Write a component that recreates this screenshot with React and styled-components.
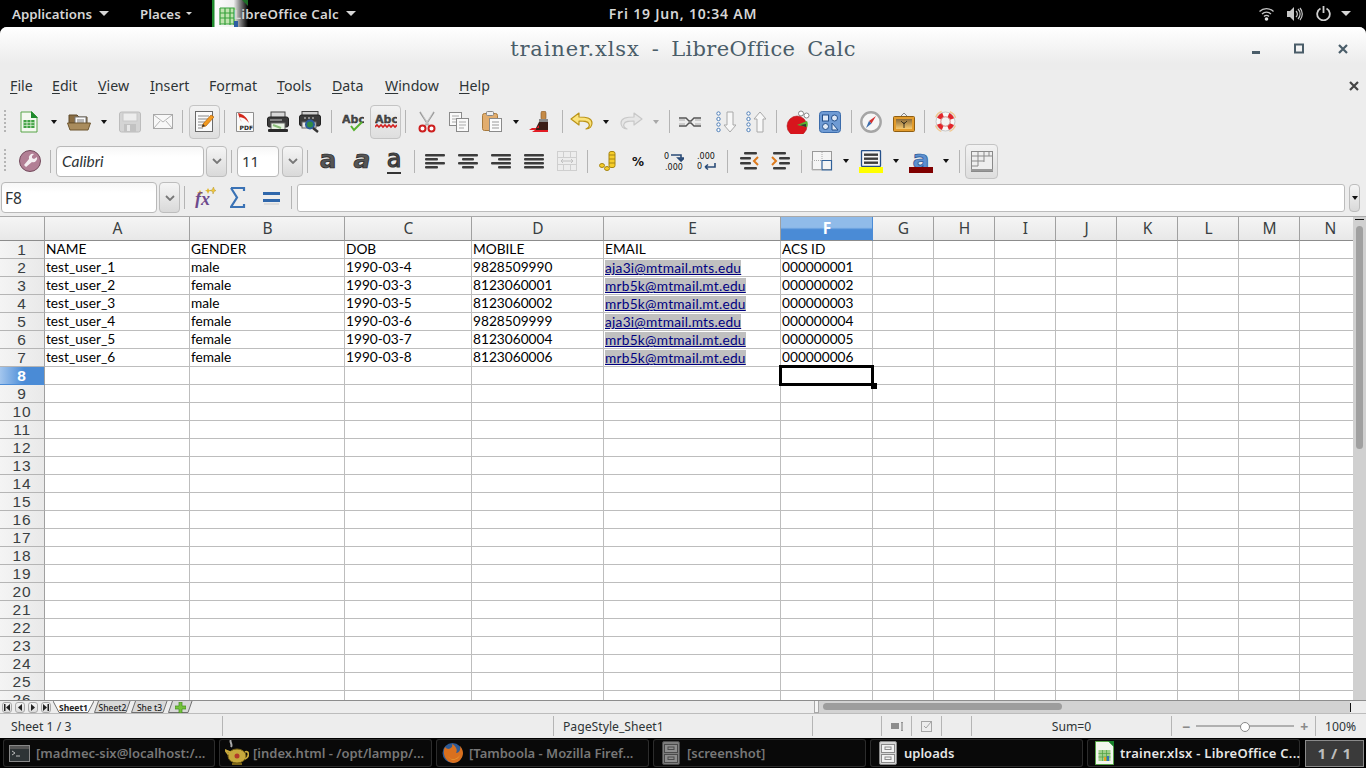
import React from "react";
import styled, { createGlobalStyle } from "styled-components";

const UI_FONT = `"Noto Sans", "Open Sans", "DejaVu Sans", sans-serif`;
const COLS = "45px 145px 155px 127px 132px 177px 92px 61px 61px 61px 61px 61px 61px 61px 61px";
const LETTERS = ["A", "B", "C", "D", "E", "F", "G", "H", "I", "J", "K", "L", "M", "N"];

const DATA = [
  ["NAME", "GENDER", "DOB", "MOBILE", "EMAIL", "ACS ID"],
  ["test_user_1", "male", "1990-03-4", "9828509990", "aja3i@mtmail.mts.edu", "000000001"],
  ["test_user_2", "female", "1990-03-3", "8123060001", "mrb5k@mtmail.mt.edu", "000000002"],
  ["test_user_3", "male", "1990-03-5", "8123060002", "mrb5k@mtmail.mt.edu", "000000003"],
  ["test_user_4", "female", "1990-03-6", "9828509999", "aja3i@mtmail.mts.edu", "000000004"],
  ["test_user_5", "female", "1990-03-7", "8123060004", "mrb5k@mtmail.mt.edu", "000000005"],
  ["test_user_6", "female", "1990-03-8", "8123060006", "mrb5k@mtmail.mt.edu", "000000006"],
];

const GlobalStyle = createGlobalStyle`
  html, body { margin: 0; padding: 0; background: #000; }
  body { font-family: ${UI_FONT}; overflow: hidden; }
  * { box-sizing: border-box; }
`;

const Shell = styled.div`
  width: 1366px;
  height: 768px;
  display: flex;
  flex-direction: column;
  overflow: hidden;
  background: #000;
`;

/* gnome panel */
const Panel = styled.div`
  height: 27px;
  flex: none;
  display: grid;
  grid-template-columns: 1fr auto 1fr;
  align-items: center;
  color: #d6d6d6;
  font-size: 13.3px;
  font-weight: 600;
`;
const PanelLeft = styled.div`
  display: flex;
  align-items: center;
  height: 100%;
`;
const PanelRight = styled.div`
  display: flex;
  align-items: center;
  justify-content: flex-end;
  height: 100%;
  padding-right: 15px;
  gap: 13px;
`;
const PanelItem = styled.div`
  display: flex;
  align-items: center;
  margin-left: ${(p) => p.$ml}px;
  gap: ${(p) => p.$gap || 7}px;
  letter-spacing: ${(p) => p.$ls || 0}px;
  white-space: nowrap;
`;
const Clock = styled.div`
  white-space: nowrap;
  font-size: 14px;
  letter-spacing: 0.8px;
`;
const AppIconBox = styled.div`
  width: 36px;
  height: 27px;
  margin-left: 20px;
  margin-right: -14px;
  flex: none;
`;
const PanelCaret = styled.span`
  width: 0;
  height: 0;
  margin-left: ${(p) => p.$ml || 0}px;
  border-left: ${(p) => p.$s || 5}px solid transparent;
  border-right: ${(p) => p.$s || 5}px solid transparent;
  border-top: ${(p) => p.$s || 5}px solid #d6d6d6;
`;

/* window */
const Win = styled.div`
  flex: 1;
  display: flex;
  flex-direction: column;
  background: #ededed;
  border-radius: 7px 7px 0 0;
  overflow: hidden;
  min-height: 0;
`;
const TitleBar = styled.div`
  height: 43px;
  flex: none;
  display: grid;
  grid-template-columns: 1fr auto 1fr;
  align-items: center;
  background: linear-gradient(#ffffff, #ececec 85%);
`;
const Title = styled.div`
  font-family: "DejaVu Serif", serif;
  font-size: 21px;
  color: #4a5d69;
  white-space: pre;
  letter-spacing: 0.35px;
  word-spacing: -1px;
  padding-top: 1px;
`;
const TitleFile = styled.span`
  letter-spacing: 0.85px;
`;
const WinButtons = styled.div`
  display: flex;
  justify-content: flex-end;
  align-items: center;
  padding-right: 18px;
  gap: 34px;
`;
const MenuBar = styled.div`
  height: 30px;
  flex: none;
  display: flex;
  align-items: center;
  padding: 1px 7px 0 0;
  font-size: 14.2px;
  color: #2e3436;
`;
const MenuItem = styled.div`
  width: ${(p) => p.$w}px;
  padding-left: 10px;
  flex: none;
  u { text-underline-offset: 2px; text-decoration-thickness: 1px; }
`;
const MenuClose = styled.div`
  margin-left: auto;
  display: flex;
`;
const ToolRow = styled.div`
  height: ${(p) => p.$h}px;
  flex: none;
  display: flex;
  align-items: center;
`;
const Slot = styled.div`
  width: ${(p) => p.$w}px;
  height: 100%;
  flex: none;
  display: flex;
  align-items: center;
  justify-content: center;
`;
const Grip = styled.div`
  width: 2px;
  height: 24px;
  margin-left: -1px;
  background: repeating-linear-gradient(#b5b5b5 0 2px, transparent 2px 4px);
`;
const Sep = styled.div`
  width: 1px;
  height: 23px;
  background: #b4b4b4;
`;
const Caret = styled.span`
  width: 0;
  height: 0;
  border-left: 3.5px solid transparent;
  border-right: 3.5px solid transparent;
  border-top: 4px solid ${(p) => (p.$off ? "#a8a8a8" : "#111")};
`;
const Toggled = styled.div`
  width: ${(p) => p.$w}px;
  height: ${(p) => p.$h}px;
  display: flex;
  align-items: center;
  justify-content: center;
  border: 1px solid #c4c4c4;
  border-radius: 4px;
  background: linear-gradient(#f2f2f2, #dedede);
`;
const Field = styled.div`
  width: ${(p) => p.$w}px;
  height: ${(p) => p.$h}px;
  flex: none;
  display: flex;
  align-items: center;
  padding-left: ${(p) => p.$pad || 5}px;
  background: linear-gradient(#f7f7f7, #fff 35%);
  border: 1px solid #b9b9b9;
  border-radius: 4px;
  color: #2e3436;
  font-family: ${(p) => (p.$italic ? `"Lato", sans-serif` : UI_FONT)};
  font-style: ${(p) => (p.$italic ? "italic" : "normal")};
  font-size: ${(p) => p.$size || 14}px;
  margin-left: ${(p) => p.$ml || 0}px;
`;
const Drop = styled.div`
  width: ${(p) => p.$w || 21}px;
  height: ${(p) => p.$h || 31}px;
  flex: none;
  display: flex;
  align-items: center;
  justify-content: center;
  margin-left: ${(p) => p.$ml || 0}px;
  border: 1px solid #bdbdbd;
  border-radius: 4px;
  background: linear-gradient(#f5f5f5, #d9d9d9);
`;
const FormulaRow = styled.div`
  height: 37px;
  flex: none;
  display: flex;
  align-items: flex-start;
  padding: 3px 0 0 1px;
`;
const FormulaSlot = styled(Slot)`
  height: 31px;
`;
const FormulaInput = styled.div`
  width: 1048px;
  height: 28px;
  flex: none;
  margin: 2px 0 0 3px;
  background: #fff;
  border: 1px solid #bcbcbc;
  border-radius: 3px;
`;
const FormulaDrop = styled(Drop)`
  margin-top: 2px;
`;

/* big toolbar letters, bold/italic/underline and font colour */
const Glyph = styled.span`
  display: block;
  height: 22px;
  line-height: 19px;
  font-family: "DejaVu Sans", sans-serif;
  font-size: 25px;
  font-weight: 700;
  font-style: ${(p) => (p.$italic ? "italic" : "normal")};
  color: ${(p) => p.$color || "#555"};
  -webkit-text-stroke: 0.7px ${(p) => p.$edge || "#1e1e1e"};
`;
const UnderGlyph = styled(Glyph)`
  font-weight: 400;
  font-size: 24px;
  -webkit-text-stroke: 1.2px #333;
  position: relative;
  &::after {
    content: "";
    position: absolute;
    left: 0;
    right: 0;
    bottom: -2px;
    height: 2px;
    background: #333;
  }
`;
const Swatch = styled.div`
  position: relative;
  width: 24px;
  height: 23px;
  display: flex;
  justify-content: center;
  &::after {
    content: "";
    position: absolute;
    left: 0;
    right: 0;
    bottom: 0;
    height: 6px;
    background: #800000;
  }
`;

/* sheet */
const SheetArea = styled.div`
  flex: 1;
  display: flex;
  min-height: 0;
  background: #fff;
  border-top: 1px solid #a9a9a9;
  overflow: hidden;
`;
const SheetGrid = styled.div`
  width: 1353px;
  flex: none;
  overflow: hidden;
`;
const Row = styled.div`
  display: grid;
  grid-template-columns: ${COLS};
  height: ${(p) => p.$h || 18}px;
`;
const ColHead = styled.div`
  display: flex;
  align-items: center;
  justify-content: center;
  padding: 0 0 1px 1px;
  font-size: 15.5px;
  font-weight: ${(p) => (p.$on ? 700 : 400)};
  color: ${(p) => (p.$on ? "#fff" : "#3a3f42")};
  background: ${(p) =>
    p.$on
      ? "linear-gradient(#90bbe9 0 45%, #4a8bd6 55%)"
      : "linear-gradient(#f5f5f5, #e8e8e8)"};
  border-right: 1px solid ${(p) => (p.$on ? "#4a8bd6" : "#a0a0a0")};
  border-bottom: 1px solid #8c8c8c;
`;
const RowHead = styled.div`
  display: flex;
  align-items: center;
  justify-content: center;
  font-family: "Liberation Sans", Arial, sans-serif;
  font-size: 15.5px;
  letter-spacing: 0.8px;
  line-height: 17px;
  font-weight: ${(p) => (p.$on ? 700 : 400)};
  color: ${(p) => (p.$on ? "#fff" : "#3a3f42")};
  background: ${(p) =>
    p.$on ? "linear-gradient(90deg, #a3c6ee, #4a8bd6 55%)" : "linear-gradient(90deg, #f4f4f4, #e9e9e9)"};
  border-right: 1px solid #a0a0a0;
  border-bottom: 1px solid ${(p) => (p.$on ? "#4a8bd6" : "#b5b5b5")};
`;
const Cell = styled.div`
  position: relative;
  padding-left: 1px;
  font-family: "Lato", sans-serif;
  font-size: 13.7px;
  line-height: 15px;
  color: #000;
  white-space: nowrap;
  border-right: 1px solid #bdbdbd;
  border-bottom: 1px solid #bdbdbd;
`;
const MailLink = styled.span`
  display: inline-block;
  height: 15px;
  line-height: 15px;
  margin-top: 1px;
  letter-spacing: 0.25px;
  background: #c0c0c0;
  color: #000080;
  text-decoration: underline;
`;
const CellCursor = styled.div`
  position: absolute;
  left: -2px;
  top: -2px;
  width: 95px;
  height: 21px;
  border: 3px solid #000;
  pointer-events: none;
  z-index: 2;
  &::after {
    content: "";
    position: absolute;
    right: -6px;
    bottom: -6px;
    width: 6px;
    height: 6px;
    background: #000;
  }
`;
const VScroll = styled.div`
  flex: 1;
  background: #d0d0d0;
  position: relative;
  padding: 9px 3px 0;
  &::before {
    content: "";
    position: absolute;
    left: 2px;
    right: 2px;
    top: 2px;
    height: 1px;
    background: #111;
  }
`;
const VThumb = styled.div`
  height: 223px;
  background: #a0a0a0;
  border-radius: 4px;
`;

/* tabs + hscroll */
const TabBar = styled.div`
  height: 14px;
  flex: none;
  display: flex;
  background: #ededed;
  border-top: 1px solid #8d8d8d;
  border-bottom: 1px solid #bcbcbc;
`;
const NavGroup = styled.div`
  width: 53px;
  flex: none;
  display: flex;
  align-items: center;
  padding-left: 2px;
  gap: 3px;
`;
const NavBtn = styled.div`
  width: 10px;
  height: 11px;
  display: flex;
  align-items: center;
  justify-content: center;
  border: 1px solid #a9a9a9;
  border-radius: 3px;
  background: linear-gradient(#f4f4f4, #dcdcdc);
`;
const Tab = styled.div`
  position: relative;
  width: ${(p) => p.$w}px;
  flex: none;
  display: flex;
  align-items: center;
  justify-content: center;
  font-size: 8.5px;
  font-weight: ${(p) => (p.$on ? 700 : 500)};
  color: #222;
  span { position: relative; }
  svg.shape { position: absolute; left: 0; top: 0; }
`;
const TabFiller = styled.div`
  width: 621px;
  flex: none;
`;
const Splitter = styled.div`
  width: 5px;
  flex: none;
  background: #f4f4f4;
  border: 1px solid #a8a8a8;
  border-top: none;
`;
const HTrack = styled.div`
  width: 531px;
  flex: none;
  padding: 2px 4px;
  background: #d2d2d2;
`;
const HThumb = styled.div`
  width: 239px;
  height: 7px;
  background: #9d9d9d;
  border-radius: 4px;
`;
const TabEnd = styled.div`
  flex: 1;
  position: relative;
  &::before {
    content: "";
    position: absolute;
    left: 0;
    top: 2px;
    height: 9px;
    width: 1px;
    background: #111;
  }
`;

/* status bar */
const StatusBar = styled.div`
  height: 24px;
  flex: none;
  display: flex;
  align-items: stretch;
  padding: 2px 0;
  color: #2e3436;
  font-size: 12.2px;
`;
const StatusCell = styled.div`
  width: ${(p) => p.$w}px;
  flex: none;
  display: flex;
  align-items: center;
  justify-content: ${(p) => p.$align || "flex-start"};
  padding-left: ${(p) => p.$pad || 0}px;
  border-left: ${(p) => (p.$first ? "none" : "1px solid #b5b5b5")};
  gap: 6px;
`;
const Slider = styled.div`
  position: relative;
  width: 98px;
  height: 2px;
  background: #b0b0b0;
  &::after {
    content: "";
    position: absolute;
    left: 44px;
    top: -3px;
    width: 8px;
    height: 8px;
    border-radius: 50%;
    background: #fff;
    border: 1px solid #888;
  }
`;
const SliderMark = styled.span`
  color: #8a8a8a;
  font-weight: 700;
  font-size: 14px;
`;

/* window list */
const TaskBar = styled.div`
  height: 30px;
  flex: none;
  display: flex;
  align-items: center;
  padding: 1px 3px;
  gap: 4px;
  background: #000;
`;
const TaskItem = styled.div`
  width: ${(p) => p.$w || 213}px;
  height: 28px;
  flex: none;
  display: flex;
  align-items: center;
  padding-left: ${(p) => p.$pad || 6}px;
  gap: ${(p) => p.$gap || 6}px;
  border-radius: 3px;
  background: #090909;
  box-shadow: inset 0 0 0 1px #2c2c2c;
  font-size: 13px;
  font-weight: 600;
  white-space: nowrap;
  overflow: hidden;
  letter-spacing: ${(p) => p.$ls || 0}px;
  color: ${(p) => (p.$on ? "#e6e6e6" : "#777")};
`;
const Pager = styled.div`
  width: 59px;
  height: 27px;
  flex: none;
  margin-left: 1px;
  display: flex;
  align-items: center;
  justify-content: center;
  background: #3a3a3a;
  border: 1px solid #8a8a8a;
  color: #bdbdbd;
  font-size: 15px;
  font-weight: 700;
  letter-spacing: 0.6px;
`;

const Ico = ({ w = 24, h = 24, children }) => (
  <svg width={w} height={h} viewBox={`0 0 ${w} ${h}`} style={{ display: "block", flex: "none" }}>
    {children}
  </svg>
);

const SvgText = ({ children, ...rest }) => (
  <text fontFamily='"DejaVu Sans", sans-serif' {...rest}>
    {children}
  </text>
);

const NewCalcIcon = () => (
  <Ico w={18} h={22}>
    <path d="M1 1h11l5 5v15H1z" fill="#f4f8f0" stroke="#58a548" />
    <path d="M11 0l7 7h-7z" fill="#1f8a2d" />
    <rect x="3.5" y="9" width="11" height="8" fill="#3fa142" />
    <path d="M3.5 11.7h11M3.5 14.4h11M7 9v8M10.8 9v8" stroke="#dff0d8" strokeWidth="0.8" />
  </Ico>
);
const OpenIcon = () => (
  <Ico w={24} h={20}>
    <path d="M2 3h8l2 2h8v6H2z" fill="#8a6d42" stroke="#5f4a2a" />
    <rect x="8" y="5" width="11" height="9" fill="#fafafa" stroke="#777" />
    <path d="M10 8h7M10 10h7" stroke="#777" />
    <path d="M0.5 11h23l-2.5 7H3z" fill="#a98c5d" stroke="#6e5731" />
  </Ico>
);
const SaveIcon = () => (
  <Ico w={22} h={22}>
    <rect x="0.5" y="1" width="21" height="20" rx="2" fill="#d4d4d4" stroke="#bcbcbc" />
    <rect x="4" y="2" width="14" height="8" fill="#ededed" stroke="#c8c8c8" />
    <rect x="5" y="13" width="12" height="8" fill="#c2c2c2" />
    <rect x="8" y="14" width="3" height="6" fill="#e8e8e8" />
  </Ico>
);
const MailIcon = () => (
  <Ico w={20} h={15}>
    <rect x="0.5" y="0.5" width="19" height="14" fill="#f8f8f8" stroke="#a8a8a8" />
    <path d="M1 1l9 7 9-7M1 14l6-7M19 14l-6-7" fill="none" stroke="#b5b5b5" />
  </Ico>
);
const EditIcon = () => (
  <Ico w={19} h={21}>
    <rect x="0.5" y="0.5" width="17" height="20" fill="#fafafa" stroke="#6a6a6a" />
    <path d="M3 5h11M3 8h11M3 11h7M3 14h6M3 17h5" stroke="#888" />
    <path d="M7 16l1-3L16 4l3 2-8 9z" fill="#f39a1e" stroke="#b3620c" strokeWidth="0.7" />
    <path d="M7 16l1-3 2 2z" fill="#333" />
  </Ico>
);
const PdfIcon = () => (
  <Ico w={18} h={20}>
    <path d="M.5.5h17v19H.5z" fill="#fafafa" stroke="#8f8f8f" />
    <path d="M2 1c5 1 9 4 11 10-3-4-6-6-10-6l3 5C4 8 3 5 2 1z" fill="#d3281c" />
    <SvgText x="3.5" y="17.5" fontSize="6" fontWeight="700" fill="#222">PDF</SvgText>
  </Ico>
);
const PrintIcon = () => (
  <Ico w={22} h={22}>
    <rect x="4" y="1" width="14" height="7" fill="#d8d8d8" stroke="#444" />
    <rect x="0.5" y="6" width="21" height="10" rx="2" fill="#3b3b3b" stroke="#222" />
    <path d="M3 9h12" stroke="#ccc" />
    <rect x="4" y="12" width="14" height="7" fill="#e9f3e4" stroke="#666" />
    <path d="M6 14l8 3" stroke="#8bbf7a" strokeWidth="2" />
    <rect x="1" y="18" width="20" height="3" rx="1" fill="#2a2a2a" />
  </Ico>
);
const PreviewIcon = () => (
  <Ico w={22} h={22}>
    <rect x="3" y="0.5" width="16" height="5" fill="#cfcfcf" stroke="#444" />
    <rect x="0.5" y="4" width="21" height="11" rx="2" fill="#3b3b3b" stroke="#222" />
    <path d="M5 7h2M9 7h2M13 7h2" stroke="#ddd" />
    <rect x="3" y="11" width="14" height="6" fill="#e6e6e6" stroke="#666" />
    <circle cx="11" cy="13.5" r="4" fill="#2f8a45" stroke="#2a5c9c" strokeWidth="2" />
    <path d="M14 17l5 4" stroke="#333" strokeWidth="2.5" />
  </Ico>
);
const SpellIcon = () => (
  <Ico w={22} h={20}>
    <SvgText x="0" y="11" fontSize="11" fontWeight="700" fill="#4a4a4a" stroke="#222" strokeWidth="0.3">Abc</SvgText>
    <path d="M9 14l3 4 8-8" fill="none" stroke="#57b22e" strokeWidth="2" />
  </Ico>
);
const AutoSpellIcon = () => (
  <Ico w={22} h={18}>
    <SvgText x="0" y="10" fontSize="11" fontWeight="700" fill="#4a4a4a" stroke="#222" strokeWidth="0.3">Abc</SvgText>
    <path d="M0 14l2-2 2 2 2-2 2 2 2-2 2 2 2-2 2 2 2-2 2 2 2-2" fill="none" stroke="#d31f1f" strokeWidth="1.6" />
  </Ico>
);
const CutIcon = () => (
  <Ico w={18} h={22}>
    <path d="M2 1l9 14M16 1L7 15" stroke="#999" strokeWidth="1.6" />
    <path d="M3 1l8 14M15 1L7 15" stroke="#e6e6e6" strokeWidth="0.6" />
    <circle cx="4.5" cy="17.5" r="3" fill="#fff" stroke="#cd1f1f" strokeWidth="2" />
    <circle cx="13.5" cy="17.5" r="3" fill="#fff" stroke="#cd1f1f" strokeWidth="2" />
  </Ico>
);
const CopyIcon = () => (
  <Ico w={20} h={20}>
    <rect x="0.5" y="0.5" width="12" height="13" fill="#fafafa" stroke="#8a8a8a" />
    <path d="M3 4h7M3 7h7M3 10h5" stroke="#aaa" />
    <rect x="7.5" y="6.5" width="12" height="13" fill="#fafafa" stroke="#8a8a8a" />
    <path d="M10 10h7M10 13h7M10 16h5" stroke="#aaa" />
  </Ico>
);
const PasteIcon = () => (
  <Ico w={20} h={21}>
    <rect x="0.5" y="2.5" width="15" height="17" rx="2" fill="#e2ad6e" stroke="#a87a3d" />
    <rect x="4.5" y="0.5" width="7" height="4" rx="1" fill="#eee" stroke="#888" />
    <rect x="7.5" y="7.5" width="12" height="13" fill="#fcfcfc" stroke="#8a8a8a" />
    <path d="M10 11h7M10 14h7M10 17h7" stroke="#999" />
  </Ico>
);
const BrushIcon = () => (
  <Ico w={22} h={22}>
    <rect x="12" y="0" width="5" height="9" rx="2" fill="#c58a45" stroke="#80552a" strokeWidth="0.6" />
    <rect x="10" y="8" width="9" height="3" fill="#888" />
    <path d="M10 11h9v8H6z" fill="#3a1d16" />
    <path d="M10 14l-4 5H0l3-2h7z" fill="#e31c24" />
    <path d="M6 19h13v2H3z" fill="#e31c24" />
  </Ico>
);
const UndoIcon = ({ off }) => (
  <Ico w={23} h={20}>
    <path
      d="M9 1L1 7l8 6V9c5 0 9 0 10 3 1 2-1 4-3 5 4 0 6-3 6-6 0-5-6-6-13-6z"
      fill={off ? "#e6e6e6" : "#fbe37c"}
      stroke={off ? "#c8c8c8" : "#bb9418"}
      strokeWidth="1.2"
      strokeLinejoin="round"
      transform={off ? "matrix(-1 0 0 1 23 0)" : undefined}
    />
  </Ico>
);
const ChainIcon = () => (
  <Ico w={22} h={12}>
    <path d="M0 2h7l3 3h2l3-3h7M0 10h7l3-3h2l3 3h7" fill="none" stroke="#555" strokeWidth="1.4" />
    <path d="M0 4h6M16 4h6M0 8h6M16 8h6" stroke="#aaa" />
  </Ico>
);
const SortIcon = ({ up }) => (
  <Ico w={20} h={22}>
    {[2.5, 8, 13.5, 19].map((y) => (
      <circle key={y} cx="2.5" cy={y} r="1.7" fill="#fff" stroke="#4f7fb8" />
    ))}
    <path
      d={up ? "M14 1l6 7h-3v13h-6V8H8z" : "M11 1h6v13h3l-6 7-6-7h3z"}
      fill="#f8f8f8"
      stroke="#a8a8a8"
    />
  </Ico>
);
const ChartIcon = () => (
  <Ico w={24} h={24}>
    <circle cx="15" cy="3.5" r="2.5" fill="#fff" stroke="#888" />
    <circle cx="20.5" cy="5.5" r="2.5" fill="#fff" stroke="#888" />
    <circle cx="11" cy="16" r="10" fill="#d8151d" stroke="#a80e12" strokeWidth="0.5" />
    <path d="M11 15l10-4c1 2 1 4 0 6z" fill="#57b22e" />
    <path d="M14 15l6-1v3z" fill="#333" />
  </Ico>
);
const ShapesIcon = () => (
  <Ico w={22} h={22}>
    <rect x="0.5" y="0.5" width="21" height="21" rx="3" fill="#6f9bd4" stroke="#3c6cab" />
    <rect x="3.5" y="4" width="6" height="6" fill="#dfe9f6" stroke="#234f8a" />
    <circle cx="15.5" cy="7" r="3" fill="#dfe9f6" stroke="#234f8a" />
    <circle cx="6.5" cy="15.5" r="3" fill="#dfe9f6" stroke="#234f8a" />
    <path d="M13 12v7h6z" fill="#dfe9f6" stroke="#234f8a" />
  </Ico>
);
const CompassIcon = () => (
  <Ico w={22} h={22}>
    <circle cx="11" cy="11" r="9.700" fill="#f6f6f6" stroke="#a5a5a5" strokeWidth="2.400" />
    <path d="M16 5l-7 5 2.500 2.500z" fill="#d33131" />
    <path d="M6 17l3-7 2.500 2.500z" fill="#3c6cab" />
  </Ico>
);
const GalleryIcon = () => (
  <Ico w={22} h={20}>
    <defs>
      <linearGradient id="gallerySky" x1="0" x2="0" y1="0" y2="1">
        <stop offset="0" stopColor="#8a6a3a" />
        <stop offset="1" stopColor="#f6c96f" />
      </linearGradient>
    </defs>
    <path d="M7 5l4-4 4 4" fill="none" stroke="#888" />
    <rect x="0.5" y="4.5" width="21" height="15" rx="1" fill="#e39c2c" stroke="#8f5e12" />
    <rect x="3" y="7" width="16" height="10" fill="url(#gallerySky)" />
    <path d="M11 16V10M11 12l-3-3M11 12l3-3" stroke="#3d3320" />
  </Ico>
);
const HelpIcon = () => (
  <Ico w={23} h={23}>
    <circle
      cx="11.5"
      cy="11.5"
      r="10.800"
      fill="none"
      stroke="#f1c78e"
      strokeWidth="1.200"
      strokeDasharray="8.500 8.460"
      strokeDashoffset="-4.230"
    />
    <circle cx="11.5" cy="11.5" r="9.500" fill="#f7f7f7" stroke="#c8c8c8" />
    <circle
      cx="11.5"
      cy="11.5"
      r="7"
      fill="none"
      stroke="#e3262b"
      strokeWidth="4.500"
      strokeDasharray="5.500 5.500"
      strokeDashoffset="-2.750"
    />
    <circle cx="11.5" cy="11.5" r="4.700" fill="#f2f2f2" stroke="#c86a6a" strokeWidth="0.8" />
  </Ico>
);
const WrenchIcon = () => (
  <Ico w={22} h={22}>
    <circle cx="11" cy="11" r="10.5" fill="#b27f95" stroke="#744b5d" />
    <path d="M15 4a4 4 0 0 0-5 5l-5 6 2 2 6-5a4 4 0 0 0 5-5l-3 2-2-1 0-2z" fill="#f4eef1" />
  </Ico>
);
const AlignIcon = ({ lines }) => (
  <Ico w={20} h={15}>
    {lines.map(([x, w], i) => (
      <rect key={i} x={x} y={i * 4} width={w} height="2.6" rx="1" fill="#3c3c3c" />
    ))}
  </Ico>
);
const MergeIcon = () => (
  <Ico w={20} h={20}>
    <rect x="0.5" y="0.5" width="19" height="19" fill="none" stroke="#cfcfcf" />
    <path d="M0 6.5h20M0 13.5h20M6.5 0v6M13.5 0v6M6.5 14v6M13.5 14v6" stroke="#cfcfcf" />
    <path d="M4 10h12M4 10l2-2M4 10l2 2M16 10l-2-2M16 10l-2 2" stroke="#c0c0c0" fill="none" />
  </Ico>
);
const CoinsIcon = () => (
  <Ico w={18} h={20}>
    <rect x="10" y="0.5" width="6" height="16" rx="2" fill="#f6cd2a" stroke="#a68512" />
    <path d="M10 4h6M10 8h6M10 12h6" stroke="#a68512" />
    <ellipse cx="3" cy="14.5" rx="2.5" ry="2" fill="#f6cd2a" stroke="#a68512" />
    <ellipse cx="8" cy="17.5" rx="2.5" ry="2" fill="#f6cd2a" stroke="#a68512" />
  </Ico>
);
const PercentIcon = () => (
  <Ico w={16} h={14}>
    <SvgText x="0" y="12" fontSize="12" fontWeight="700" fill="#111">%</SvgText>
  </Ico>
);
const DecimalIcon = ({ remove }) => (
  <Ico w={20} h={20}>
    {remove ? (
      <>
        <SvgText x="0" y="8" fontSize="8" fill="#111">.000</SvgText>
        <SvgText x="0" y="18" fontSize="8" fill="#111">0</SvgText>
        <path d="M18 12v4H8M8 16l3-2.5M8 16l3 2.5" fill="none" stroke="#2a4b77" strokeWidth="1.6" />
      </>
    ) : (
      <>
        <SvgText x="0" y="8" fontSize="8" fill="#111">0</SvgText>
        <SvgText x="1" y="19" fontSize="8" fill="#111">.000</SvgText>
        <path d="M7 4h10v5M17 10l-3-3h6z" fill="none" stroke="#2a4b77" strokeWidth="1.6" />
      </>
    )}
  </Ico>
);
const IndentIcon = ({ flip }) => (
  <Ico w={22} h={18}>
    <g transform={flip ? "matrix(-1 0 0 1 22 0)" : undefined}>
      <rect x="6" y="0" width="13" height="2.4" rx="1" fill="#3c3c3c" />
      <rect x="2" y="5" width="11" height="2.4" rx="1" fill="#3c3c3c" />
      <rect x="2" y="10" width="11" height="2.4" rx="1" fill="#3c3c3c" />
      <rect x="6" y="15" width="13" height="2.4" rx="1" fill="#3c3c3c" />
      <path d="M20 5l-4 4 4 4" fill="none" stroke="#dd7a1c" strokeWidth="2" />
    </g>
  </Ico>
);
const BorderIcon = () => (
  <Ico w={22} h={20}>
    <rect x="1.5" y="0.5" width="19" height="18" fill="#f5f5f5" stroke="#999" />
    <path d="M1 9.5h10" stroke="#aaa" strokeDasharray="1 1" />
    <path d="M11 1v8" stroke="#aaa" strokeDasharray="1 1" />
    <path d="M11 9.5h9.5V19H11z" fill="none" stroke="#2f6098" strokeWidth="1.2" />
    <path d="M1 10v9h10" fill="none" stroke="#bbb" />
  </Ico>
);
const HighlightIcon = () => (
  <Ico w={24} h={23}>
    <rect x="2.5" y="0.5" width="19" height="16" rx="1" fill="#f6f6f6" stroke="#25508a" strokeWidth="1.3" />
    <rect x="5" y="3.5" width="14" height="2.4" fill="#3c3c3c" />
    <rect x="5" y="7.5" width="14" height="2.4" fill="#3c3c3c" />
    <rect x="5" y="11.5" width="14" height="2.4" fill="#3c3c3c" />
    <rect x="0" y="17" width="24" height="6" fill="#ffff00" />
  </Ico>
);
const SheetIcon = () => (
  <Ico w={22} h={21}>
    <rect x="0.5" y="0.5" width="21" height="20" fill="#eee" stroke="#8a8a8a" />
    <path d="M1 5h20M1 10h12M1 15h6M7 1v14M13 1v10M18 1v4" stroke="#8a8a8a" />
    <rect x="0" y="18" width="22" height="2" fill="#999" />
  </Ico>
);
const FxIcon = () => (
  <Ico w={22} h={21}>
    <path d="M5 5l1-2 1 2 2 .5-2 1L6 9 5 6.500 3 5.500zM13 3l1-2 1 2 2 .5-2 1L14 7 13 4.500 11 3.500z" fill="#e0b52a" />
    <path d="M18 3l1.500-3 1 3 1.500.5-2 1L19 7l-.5-2.500L16 3.500z" fill="#f2c83b" stroke="#a8881a" strokeWidth="0.4" />
    <text x="1" y="18" fontFamily='"Liberation Serif", serif' fontStyle="italic" fontWeight="700" fontSize="18" fill="#6d4a8c">
      fx
    </text>
  </Ico>
);
const SigmaIcon = () => (
  <Ico w={16} h={21}>
    <path d="M1 1h13v3M14 17v3H1l6-9.500L1 1" fill="none" stroke="#3a72b5" strokeWidth="2.2" />
  </Ico>
);
const EqualIcon = () => (
  <Ico w={17} h={15}>
    <rect x="0" y="2" width="17" height="3" fill="#2f67ab" />
    <rect x="0" y="9" width="17" height="3" fill="#2f67ab" />
    <rect x="1" y="13" width="15" height="2" fill="#dcdcdc" />
  </Ico>
);
const Chevron = () => (
  <Ico w={10} h={6}>
    <path d="M1 1l4 4 4-4" fill="none" stroke="#777" strokeWidth="1.8" />
  </Ico>
);
const WifiIcon = () => (
  <Ico w={15} h={14}>
    <path d="M.5 4.500a10 10 0 0 1 14 0M3 7a6.500 6.500 0 0 1 9 0M5 9.500a3.500 3.500 0 0 1 5 0" fill="none" stroke="#c4c4c4" strokeWidth="1.3" />
    <circle cx="7.500" cy="12" r="1.800" fill="#e0e0e0" />
  </Ico>
);
const SpeakerIcon = () => (
  <Ico w={16} h={14}>
    <path d="M0 4h3l4-4v14l-4-4H0z" fill="#c8c8c8" />
    <path d="M9 4a4 4 0 0 1 0 6M11 2a7 7 0 0 1 0 10M13 1a9 9 0 0 1 0 12" fill="none" stroke="#c8c8c8" strokeWidth="1.2" />
  </Ico>
);
const PowerIcon = () => (
  <Ico w={15} h={15}>
    <path d="M4.500 2.500a6.300 6.300 0 1 0 6 0" fill="none" stroke="#d0d0d0" strokeWidth="1.800" />
    <path d="M7.500 0v7" stroke="#d0d0d0" strokeWidth="1.800" />
  </Ico>
);
const PanelAppIcon = () => (
  <Ico w={36} h={27}>
    <defs>
      <linearGradient id="panelFade" x1="0" x2="1" y1="0" y2="0">
        <stop offset="0" stopColor="#fff" />
        <stop offset="0.6" stopColor="#eee" />
        <stop offset="1" stopColor="#000" />
      </linearGradient>
    </defs>
    <rect x="0" y="0" width="36" height="27" fill="url(#panelFade)" />
    <rect x="0" y="0" width="2.500" height="27" fill="#1f8a2d" />
    <path d="M30 0l6 6V0z" fill="#1f6d27" />
    <rect x="8" y="8" width="16" height="16" fill="#bfe3ae" />
    <path d="M8 8h14v17M8 13h14M8 18h14M8 24h14M13 8v17M18 8v17M8 8v17" fill="none" stroke="#36a03a" strokeWidth="1.200" />
    <rect x="22" y="21" width="4" height="6" fill="#2d5ea3" />
  </Ico>
);
const WinMin = () => (
  <Ico w={8} h={11}>
    <rect x="0" y="8" width="8" height="3" fill="#4a5d69" />
  </Ico>
);
const WinMax = () => (
  <Ico w={10} h={11}>
    <rect x="1" y="1.500" width="8" height="8" fill="none" stroke="#4a5d69" strokeWidth="2" />
  </Ico>
);
const CloseX = ({ color = "#4a5d69" }) => (
  <Ico w={10} h={10}>
    <path d="M1 1l8 8M9 1l-8 8" stroke={color} strokeWidth="2.200" />
  </Ico>
);
const PlusIcon = () => (
  <Ico w={11} h={11}>
    <path d="M4 0h3v4h4v3H7v4H4V7H0V4h4z" fill="#74c23a" stroke="#3f8a1c" strokeWidth="0.7" />
  </Ico>
);
const NavGlyph = ({ d }) => (
  <Ico w={6} h={7}>
    <path d={d} fill="#222" />
  </Ico>
);
const TabShape = ({ w, on }) => (
  <svg className="shape" width={w} height={12} viewBox={`0 0 ${w} 12`}>
    <path
      d={on ? `M0 0L6 11.500H${w - 6}L${w} 0` : `M4.500 0L.5 11.500H${w - 5}L${w - 1} 0`}
      fill={on ? "#fafafa" : "#d8d8d8"}
      stroke="#6f6f6f"
    />
  </svg>
);
const TerminalIcon = () => (
  <Ico w={21} h={17}>
    <rect x="0.500" y="0.500" width="20" height="16" fill="#2e3436" stroke="#888" />
    <rect x="1" y="1" width="19" height="3" fill="#555" />
    <path d="M3 6l3 2-3 2M7 11h4" fill="none" stroke="#bbb" />
  </Ico>
);
const TeapotIcon = () => (
  <Ico w={24} h={26}>
    <path d="M6 0c-2 2 2 4 0 7" fill="none" stroke="#aaa" strokeWidth="2" />
    <ellipse cx="12" cy="16" rx="9" ry="7" fill="#c7a93c" stroke="#7b6417" />
    <path d="M3 14L0 10l5 2zM20 12c4-2 5 5 0 7" fill="none" stroke="#c7a93c" strokeWidth="1.800" />
    <circle cx="12" cy="16" r="2.500" fill="#b23b2a" />
    <path d="M7 23h10v2H7z" fill="#7b6417" />
  </Ico>
);
const FirefoxIcon = () => (
  <Ico w={21} h={22}>
    <circle cx="10.500" cy="11" r="10" fill="#2e5a94" />
    <path d="M3 5c-3 6 0 15 8 16 6 0 10-5 10-10 0-3-2-6-3-7 1 4-1 7-4 7 2-3 0-7-4-9 1 3-1 4-3 5-2 0-3-1-4-2z" fill="#d9701e" />
    <path d="M6 14c2 4 8 5 12-1-2 5-9 7-12 1z" fill="#f0b13c" />
  </Ico>
);
const CabinetIcon = ({ on }) => {
  const c = on ? "#d5d5d5" : "#7d7d7d";
  const d = on ? "#8a8a8a" : "#4b4b4b";
  return (
    <Ico w={18} h={24}>
      <rect x="0.500" y="0.500" width="17" height="23" rx="1.500" fill={c} stroke={d} />
      <rect x="2.500" y="3.500" width="13" height="8" fill={on ? "#f2f2f2" : "#8e8e8e"} stroke={d} />
      <rect x="2.500" y="13.500" width="13" height="8" fill={on ? "#f2f2f2" : "#8e8e8e"} stroke={d} />
      <rect x="6" y="6" width="6" height="2.500" fill="none" stroke={d} />
      <rect x="6" y="16" width="6" height="2.500" fill="none" stroke={d} />
    </Ico>
  );
};
const CalcDocIcon = () => (
  <Ico w={19} h={24}>
    <path d="M.5.5H14l4.500 4.500v18.500H.5z" fill="#f2f6ee" stroke="#57a548" />
    <path d="M13 0l6 6V0z" fill="#17812a" />
    <rect x="3.500" y="9" width="12" height="11" fill="#9fd08a" />
    <path d="M3.500 12.500h12M3.500 16h12M7.500 9v11M11.500 9v11" stroke="#4f9f42" strokeWidth="0.7" />
    <rect x="9" y="16" width="2" height="4" fill="#e8a020" />
    <rect x="12" y="15" width="2" height="5" fill="#3a72b5" />
  </Ico>
);

const sep = (w) => ({ w, node: <Sep /> });
const caret = (w, off) => ({ w, node: <Caret $off={off} /> });
const item = (w, node) => ({ w, node });

const TOOLS_TOP = [
  item(10, <Grip />),
  item(38, <NewCalcIcon />),
  caret(12),
  item(38, <OpenIcon />),
  caret(12),
  item(40, <SaveIcon />),
  item(26, <MailIcon />),
  sep(13),
  item(31, <Toggled $w={31} $h={34}><EditIcon /></Toggled>),
  sep(8),
  item(34, <PdfIcon />),
  item(32, <PrintIcon />),
  item(32, <PreviewIcon />),
  sep(10),
  item(34, <SpellIcon />),
  item(31, <Toggled $w={31} $h={34}><AutoSpellIcon /></Toggled>),
  sep(8),
  item(36, <CutIcon />),
  item(28, <CopyIcon />),
  item(38, <PasteIcon />),
  caret(10),
  item(38, <BrushIcon />),
  sep(6),
  item(32, <UndoIcon />),
  caret(18),
  item(32, <UndoIcon off />),
  caret(18, true),
  sep(8),
  item(34, <ChainIcon />),
  item(38, <SortIcon />),
  item(22, <SortIcon up />),
  sep(18),
  item(26, <ChartIcon />),
  item(38, <ShapesIcon />),
  sep(4),
  item(36, <CompassIcon />),
  item(30, <GalleryIcon />),
  sep(10),
  item(32, <HelpIcon />),
];

const TOOLS_FORMAT_LEFT = [
  item(11, <Grip />),
  item(38, <WrenchIcon />),
  sep(2),
  item(5, null),
];

const TOOLS_FORMAT_RIGHT = [
  sep(8),
  item(34, <Glyph>a</Glyph>),
  item(34, <Glyph $italic>a</Glyph>),
  item(30, <UnderGlyph>a</UnderGlyph>),
  sep(10),
  item(32, <AlignIcon lines={[[0, 20], [0, 13], [0, 20], [0, 13]]} />),
  item(34, <AlignIcon lines={[[0, 20], [4, 12], [0, 20], [4, 12]]} />),
  item(32, <AlignIcon lines={[[0, 20], [7, 13], [0, 20], [7, 13]]} />),
  item(34, <AlignIcon lines={[[0, 20], [0, 20], [0, 20], [0, 20]]} />),
  item(32, <MergeIcon />),
  sep(8),
  item(34, <CoinsIcon />),
  item(30, <PercentIcon />),
  item(38, <DecimalIcon />),
  item(28, <DecimalIcon remove />),
  sep(12),
  item(31, <IndentIcon />),
  item(33, <IndentIcon flip />),
  sep(8),
  item(34, <BorderIcon />),
  caret(14),
  item(36, <HighlightIcon />),
  caret(14),
  item(36, <Swatch><Glyph $color="#5c8fd0" $edge="#23538f">a</Glyph></Swatch>),
  caret(14),
  sep(12),
  item(33, <Toggled $w={33} $h={35}><SheetIcon /></Toggled>),
];

const MENUS = [
  ["File", "F", 42],
  ["Edit", "E", 46],
  ["View", "V", 52],
  ["Insert", "I", 59],
  ["Format", "r", 68],
  ["Tools", "T", 55],
  ["Data", "D", 53],
  ["Window", "W", 74],
  ["Help", "H", 60],
];

const TASKS = [
  { icon: <TerminalIcon />, label: "[madmec-six@localhost:/...", w: 212 },
  { icon: <TeapotIcon />, label: "[index.html - /opt/lampp/...", gap: 4 },
  { icon: <FirefoxIcon />, label: "[Tamboola - Mozilla Firef..." },
  { icon: <CabinetIcon />, label: "[screenshot]", pad: 9, gap: 7 },
  { icon: <CabinetIcon on />, label: "uploads", bright: true, pad: 9, gap: 7 },
  { icon: <CalcDocIcon />, label: "trainer.xlsx - LibreOffice C...", bright: true, pad: 8, ls: 0.25 },
];

const renderTools = (list) =>
  list.map((t, i) => (
    <Slot key={i} $w={t.w}>
      {t.node}
    </Slot>
  ));

const MenuLabel = ({ text, mark }) => {
  const i = text.indexOf(mark);
  return (
    <>
      {text.slice(0, i)}
      <u>{mark}</u>
      {text.slice(i + 1)}
    </>
  );
};

const renderCell = (col, value) => {
  if (col === 4 && value && value.includes("@")) return <MailLink>{value}</MailLink>;
  return value;
};

const App = () => {
  const rowCount = 26;
  return (
    <>
      <GlobalStyle />
      <Shell>
        <Panel>
          <PanelLeft>
            <PanelItem $ml={12} $gap={7}>
              Applications <PanelCaret />
            </PanelItem>
            <PanelItem $ml={31} $gap={5}>
              Places <PanelCaret $s={3} />
            </PanelItem>
            <AppIconBox>
              <PanelAppIcon />
            </AppIconBox>
            <PanelItem $ml={0} $gap={7} $ls={0.25}>
              LibreOffice Calc <PanelCaret />
            </PanelItem>
          </PanelLeft>
          <Clock>Fri 19 Jun, 10:34 AM</Clock>
          <PanelRight>
            <WifiIcon />
            <SpeakerIcon />
            <PowerIcon />
            <PanelCaret $ml={-3} />
          </PanelRight>
        </Panel>

        <Win>
          <TitleBar>
            <div />
            <Title><TitleFile>trainer.xlsx</TitleFile>  -  LibreOffice  Calc</Title>
            <WinButtons>
              <WinMin />
              <WinMax />
              <CloseX />
            </WinButtons>
          </TitleBar>

          <MenuBar>
            {MENUS.map(([text, mark, w]) => (
              <MenuItem key={text} $w={w}>
                <MenuLabel text={text} mark={mark} />
              </MenuItem>
            ))}
            <MenuClose>
              <CloseX color="#444" />
            </MenuClose>
          </MenuBar>

          <ToolRow $h={43}>{renderTools(TOOLS_TOP)}</ToolRow>

          <ToolRow $h={36}>
            {renderTools(TOOLS_FORMAT_LEFT)}
            <Field $w={148} $h={31} $italic $size={15.5} $pad={5}>Calibri</Field>
            <Drop $ml={2}><Chevron /></Drop>
            <Slot $w={8}><Sep /></Slot>
            <Field $w={42} $h={31} $ml={2} $size={15} $pad={4}>11</Field>
            <Drop $ml={3}><Chevron /></Drop>
            {renderTools(TOOLS_FORMAT_RIGHT)}
          </ToolRow>

          <FormulaRow>
            <Field $w={156} $h={31} $size={15.5} $pad={3}>F8</Field>
            <Drop $ml={2}><Chevron /></Drop>
            <FormulaSlot $w={8}><Sep /></FormulaSlot>
            <FormulaSlot $w={34}><FxIcon /></FormulaSlot>
            <FormulaSlot $w={32}><SigmaIcon /></FormulaSlot>
            <FormulaSlot $w={34}><EqualIcon /></FormulaSlot>
            <FormulaSlot $w={6}><Sep /></FormulaSlot>
            <FormulaInput />
            <FormulaDrop $w={11} $h={28} $ml={4}><Caret /></FormulaDrop>
          </FormulaRow>

          <SheetArea>
            <SheetGrid>
              <Row $h={24}>
                <ColHead />
                {LETTERS.map((l) => (
                  <ColHead key={l} $on={l === "F"}>
                    {l}
                  </ColHead>
                ))}
              </Row>
              {Array.from({ length: rowCount }, (_, r) => (
                <Row key={r}>
                  <RowHead $on={r === 7}>{r + 1}</RowHead>
                  {LETTERS.map((l, c) => (
                    <Cell key={l}>
                      {DATA[r] ? renderCell(c, DATA[r][c]) : null}
                      {r === 7 && l === "F" && <CellCursor />}
                    </Cell>
                  ))}
                </Row>
              ))}
            </SheetGrid>
            <VScroll>
              <VThumb />
            </VScroll>
          </SheetArea>

          <TabBar>
            <NavGroup>
              <NavBtn><NavGlyph d="M0 0h1.500v7H0zM6 0v7L2 3.500z" /></NavBtn>
              <NavBtn><NavGlyph d="M5 0v7L1 3.500z" /></NavBtn>
              <NavBtn><NavGlyph d="M1 0v7l4-3.500z" /></NavBtn>
              <NavBtn><NavGlyph d="M6 0h-1.500v7H6zM0 0v7l4-3.500z" /></NavBtn>
            </NavGroup>
            <Tab $w={41} $on><TabShape w={41} on /><span>Sheet1</span></Tab>
            <Tab $w={37}><TabShape w={37} /><span>Sheet2</span></Tab>
            <Tab $w={37}><TabShape w={37} /><span>She t3</span></Tab>
            <Tab $w={25}><TabShape w={25} /><span><PlusIcon /></span></Tab>
            <TabFiller />
            <Splitter />
            <HTrack>
              <HThumb />
            </HTrack>
            <TabEnd />
          </TabBar>

          <StatusBar>
            <StatusCell $w={222} $pad={11} $first>Sheet 1 / 3</StatusCell>
            <StatusCell $w={331} />
            <StatusCell $w={259} $pad={9}>PageStyle_Sheet1</StatusCell>
            <StatusCell $w={69} />
            <StatusCell $w={30} $align="center">
              <Ico w={12} h={9}>
                <rect x="0" y="1" width="8" height="6" fill="#8d8d8d" />
                <path d="M10 0h2M11 0v9M10 9h2" stroke="#777" fill="none" />
              </Ico>
            </StatusCell>
            <StatusCell $w={30} $align="center">
              <Ico w={11} h={11}>
                <rect x="0.500" y="0.500" width="10" height="10" fill="none" stroke="#a5a5a5" />
                <path d="M3 5l2 2 5-6" fill="none" stroke="#a5a5a5" />
              </Ico>
            </StatusCell>
            <StatusCell $w={30} />
            <StatusCell $w={200} $align="center">Sum=0</StatusCell>
            <StatusCell $w={144} $pad={10}>
              <SliderMark>−</SliderMark>
              <Slider />
              <SliderMark>+</SliderMark>
            </StatusCell>
            <StatusCell $w={51} $pad={9}>100%</StatusCell>
          </StatusBar>
        </Win>

        <TaskBar>
          {TASKS.map((t) => (
            <TaskItem key={t.label} $on={t.bright} $w={t.w} $pad={t.pad} $gap={t.gap} $ls={t.ls}>
              {t.icon}
              {t.label}
            </TaskItem>
          ))}
          <Pager>1 / 1</Pager>
        </TaskBar>
      </Shell>
    </>
  );
};

export default App;
